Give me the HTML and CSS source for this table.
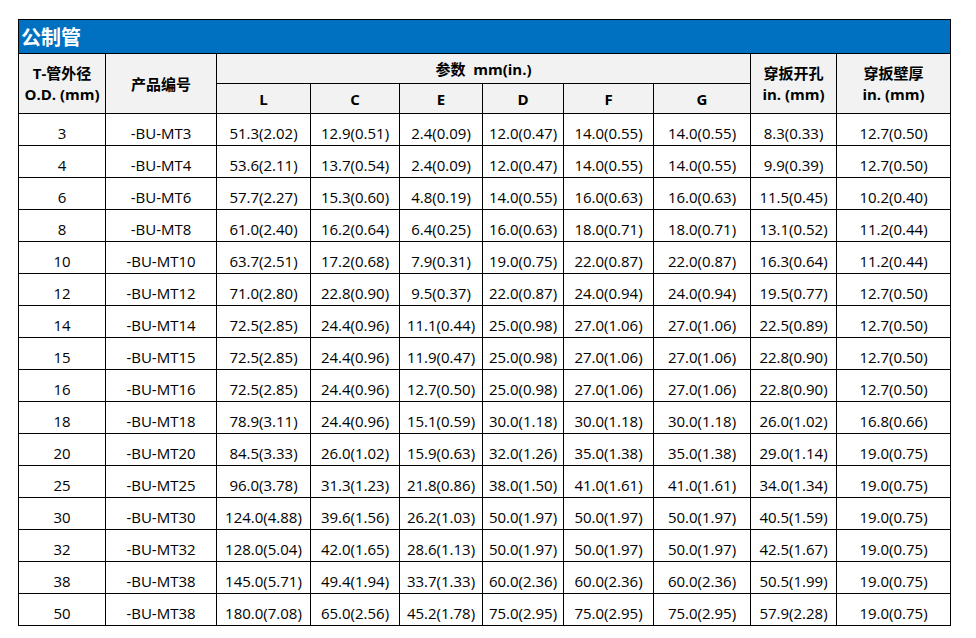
FILE: index.html
```html
<!DOCTYPE html>
<html lang="zh">
<head>
<meta charset="utf-8">
<title>公制管</title>
<link rel="stylesheet" href="styles.css">
</head>
<body>
<table class="spec">
  <colgroup>
    <col class="c-od"><col class="c-pn"><col class="c-l"><col class="c-c"><col class="c-e"><col class="c-d"><col class="c-f"><col class="c-g"><col class="c-h"><col class="c-t">
  </colgroup>
  <thead>
    <tr class="title-row"><th colspan="10" class="title">公制管</th></tr>
    <tr class="head1">
      <th rowspan="2" class="two">T-管外径<br>O.D. (mm)</th>
      <th rowspan="2">产品编号</th>
      <th colspan="6">参数&nbsp; mm(in.)</th>
      <th rowspan="2" class="two">穿扳开孔<br>in. (mm)</th>
      <th rowspan="2" class="two">穿扳壁厚<br>in. (mm)</th>
    </tr>
    <tr class="head2">
      <th>L</th><th>C</th><th>E</th><th>D</th><th>F</th><th>G</th>
    </tr>
  </thead>
  <tbody>
    <tr><td>3</td><td>-BU-MT3</td><td>51.3(2.02)</td><td>12.9(0.51)</td><td>2.4(0.09)</td><td>12.0(0.47)</td><td>14.0(0.55)</td><td>14.0(0.55)</td><td>8.3(0.33)</td><td>12.7(0.50)</td></tr>
    <tr><td>4</td><td>-BU-MT4</td><td>53.6(2.11)</td><td>13.7(0.54)</td><td>2.4(0.09)</td><td>12.0(0.47)</td><td>14.0(0.55)</td><td>14.0(0.55)</td><td>9.9(0.39)</td><td>12.7(0.50)</td></tr>
    <tr><td>6</td><td>-BU-MT6</td><td>57.7(2.27)</td><td>15.3(0.60)</td><td>4.8(0.19)</td><td>14.0(0.55)</td><td>16.0(0.63)</td><td>16.0(0.63)</td><td>11.5(0.45)</td><td>10.2(0.40)</td></tr>
    <tr><td>8</td><td>-BU-MT8</td><td>61.0(2.40)</td><td>16.2(0.64)</td><td>6.4(0.25)</td><td>16.0(0.63)</td><td>18.0(0.71)</td><td>18.0(0.71)</td><td>13.1(0.52)</td><td>11.2(0.44)</td></tr>
    <tr><td>10</td><td>-BU-MT10</td><td>63.7(2.51)</td><td>17.2(0.68)</td><td>7.9(0.31)</td><td>19.0(0.75)</td><td>22.0(0.87)</td><td>22.0(0.87)</td><td>16.3(0.64)</td><td>11.2(0.44)</td></tr>
    <tr><td>12</td><td>-BU-MT12</td><td>71.0(2.80)</td><td>22.8(0.90)</td><td>9.5(0.37)</td><td>22.0(0.87)</td><td>24.0(0.94)</td><td>24.0(0.94)</td><td>19.5(0.77)</td><td>12.7(0.50)</td></tr>
    <tr><td>14</td><td>-BU-MT14</td><td>72.5(2.85)</td><td>24.4(0.96)</td><td>11.1(0.44)</td><td>25.0(0.98)</td><td>27.0(1.06)</td><td>27.0(1.06)</td><td>22.5(0.89)</td><td>12.7(0.50)</td></tr>
    <tr><td>15</td><td>-BU-MT15</td><td>72.5(2.85)</td><td>24.4(0.96)</td><td>11.9(0.47)</td><td>25.0(0.98)</td><td>27.0(1.06)</td><td>27.0(1.06)</td><td>22.8(0.90)</td><td>12.7(0.50)</td></tr>
    <tr><td>16</td><td>-BU-MT16</td><td>72.5(2.85)</td><td>24.4(0.96)</td><td>12.7(0.50)</td><td>25.0(0.98)</td><td>27.0(1.06)</td><td>27.0(1.06)</td><td>22.8(0.90)</td><td>12.7(0.50)</td></tr>
    <tr><td>18</td><td>-BU-MT18</td><td>78.9(3.11)</td><td>24.4(0.96)</td><td>15.1(0.59)</td><td>30.0(1.18)</td><td>30.0(1.18)</td><td>30.0(1.18)</td><td>26.0(1.02)</td><td>16.8(0.66)</td></tr>
    <tr><td>20</td><td>-BU-MT20</td><td>84.5(3.33)</td><td>26.0(1.02)</td><td>15.9(0.63)</td><td>32.0(1.26)</td><td>35.0(1.38)</td><td>35.0(1.38)</td><td>29.0(1.14)</td><td>19.0(0.75)</td></tr>
    <tr><td>25</td><td>-BU-MT25</td><td>96.0(3.78)</td><td>31.3(1.23)</td><td>21.8(0.86)</td><td>38.0(1.50)</td><td>41.0(1.61)</td><td>41.0(1.61)</td><td>34.0(1.34)</td><td>19.0(0.75)</td></tr>
    <tr><td>30</td><td>-BU-MT30</td><td>124.0(4.88)</td><td>39.6(1.56)</td><td>26.2(1.03)</td><td>50.0(1.97)</td><td>50.0(1.97)</td><td>50.0(1.97)</td><td>40.5(1.59)</td><td>19.0(0.75)</td></tr>
    <tr><td>32</td><td>-BU-MT32</td><td>128.0(5.04)</td><td>42.0(1.65)</td><td>28.6(1.13)</td><td>50.0(1.97)</td><td>50.0(1.97)</td><td>50.0(1.97)</td><td>42.5(1.67)</td><td>19.0(0.75)</td></tr>
    <tr><td>38</td><td>-BU-MT38</td><td>145.0(5.71)</td><td>49.4(1.94)</td><td>33.7(1.33)</td><td>60.0(2.36)</td><td>60.0(2.36)</td><td>60.0(2.36)</td><td>50.5(1.99)</td><td>19.0(0.75)</td></tr>
    <tr><td>50</td><td>-BU-MT38</td><td>180.0(7.08)</td><td>65.0(2.56)</td><td>45.2(1.78)</td><td>75.0(2.95)</td><td>75.0(2.95)</td><td>75.0(2.95)</td><td>57.9(2.28)</td><td>19.0(0.75)</td></tr>
  </tbody>
</table>
</body>
</html>
```
FILE: styles.css
```css
html, body {
  margin: 0;
  padding: 0;
  background: #ffffff;
}
body {
  padding: 19px 0 0 18px;
  font-family: "Open Sans", "Noto Sans CJK SC", sans-serif;
  color: #000;
}
.spec {
  border-collapse: collapse;
  table-layout: fixed;
  width: 932px;
  font-size: 15px;
}
.c-od { width: 87px; }
.c-pn { width: 111px; }
.c-l { width: 94px; }
.c-c { width: 89px; }
.c-e { width: 83px; }
.c-d { width: 81px; }
.c-f { width: 90px; }
.c-g { width: 97px; }
.c-h { width: 86px; }
.c-t { width: 114px; }
.spec th, .spec td {
  border: 1px solid #000;
  padding: 0;
  text-align: center;
  vertical-align: middle;
  white-space: nowrap;
  overflow: hidden;
}
.title-row th.title {
  background: #0070c0;
  color: #fff;
  text-align: left;
  font-family: "Noto Sans CJK SC", sans-serif;
  font-weight: 700;
  font-size: 20px;
  height: 33px;
  padding: 0 0 0 2px;
  line-height: 33px;
}
.head1 th, .head2 th {
  background: #f2f2f2;
  font-weight: 700;
  font-size: 15px;
  line-height: 21px;
  font-family: "Open Sans", "Noto Sans CJK SC", sans-serif;
}
.head1 th {
  height: 27px;
  padding-top: 2px;
}
.head1 th.two {
  padding-top: 0;
}
.head2 th {
  height: 27px;
  padding-top: 2px;
}
.spec tbody td {
  height: 29px;
  padding-bottom: 2px;
  line-height: 20px;
  vertical-align: bottom;
}
```
